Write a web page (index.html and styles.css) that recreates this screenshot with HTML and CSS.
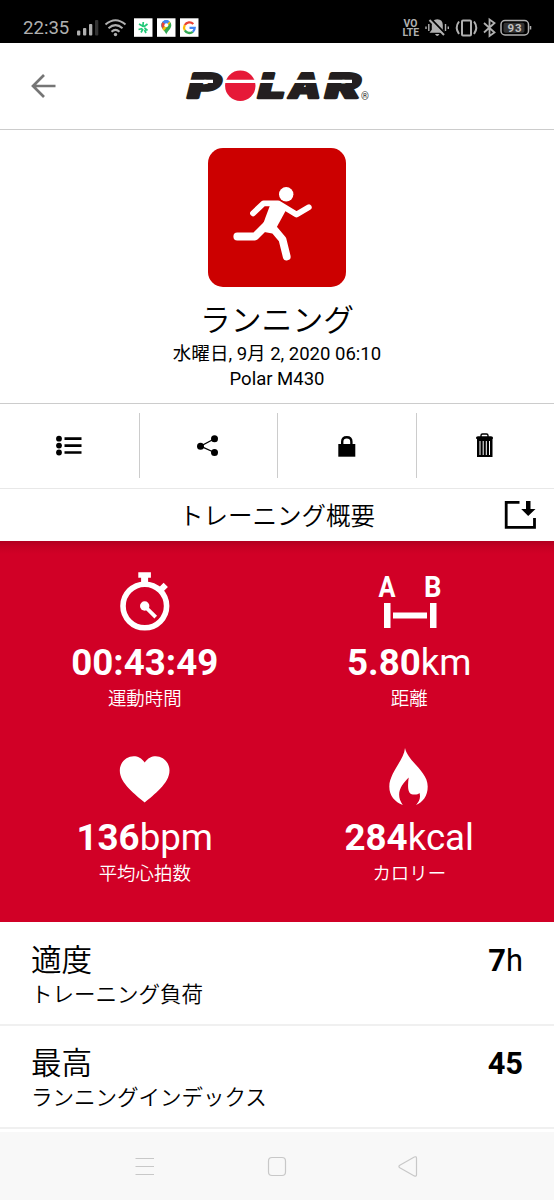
FILE: index.html
```html
<!DOCTYPE html>
<html lang="ja">
<head>
<meta charset="utf-8">
<title>Polar</title>
<link rel="stylesheet" href="styles.css">
</head>
<body>
<header class="status">
  <span class="clock">22:35</span>
  <svg class="status-left" width="132" height="43" viewBox="72 0 132 43">
    <g fill="#b0b0b0"><rect x="77" y="30.500" width="3.300" height="5" rx="1"/><rect x="83" y="28" width="3.300" height="7.500" rx="1"/><rect x="89" y="24" width="3.300" height="11.500" rx="1"/><rect x="95" y="20" width="3.300" height="15.500" rx="1" fill="#333"/></g>
    <g fill="none" stroke="#b0b0b0" stroke-width="2"><path d="M105.500 24.500Q115.500 16 125.500 24.500M108.500 28.200Q115.500 22 122.500 28.200M111.500 31.700Q115.500 28 119.500 31.700"/></g><circle cx="115.500" cy="34.500" r="1.700" fill="#b0b0b0"/>
    <g fill="#fff"><rect x="134" y="18.300" width="18.500" height="18.500"/><rect x="157" y="18.300" width="18.500" height="18.500"/><rect x="180" y="18.300" width="18.500" height="18.500"/></g>
    <path d="M139 24l3.500 2M147.500 24l-4 3M143.300 22l-.5 5M138.500 29.500l4-1M147.500 30.500l-3-2.500M141 32.500l2-3.500M146 33l-1.500-3" stroke="#20c978" stroke-width="1.700" fill="none"/>
    <g><path d="M166.300 34.500c-1-3.500-5-5.500-5-9.300a5 5 0 0 1 10 0c0 3.800-4 5.800-5 9.300z" fill="#34a853"/><path d="M161.300 25.200a5 5 0 0 1 6.500-4.700l-3 4-2.800 3.400z" fill="#4285f4"/><path d="M161.500 26a5 5 0 0 1 1.200-4l3 2.500-3.300 4z" fill="#ea4335"/><path d="M162.300 28.700l6.600-7.500 1.500 1.500-6.500 8z" fill="#fbbc04"/><path d="M163 21.500a5 5 0 0 1 6.500 0l-3 3z" fill="#4285f4"/><circle cx="166.300" cy="25.200" r="1.900" fill="#fff"/></g>
    <g fill="none" stroke-width="2.300"><path d="M193.300 24a5.400 5.400 0 0 0-8.500 1" stroke="#ea4335"/><path d="M184.800 25a5.400 5.400 0 0 0 0 5.300" stroke="#fbbc05"/><path d="M184.800 30.300a5.400 5.400 0 0 0 8 1.500" stroke="#34a853"/><path d="M192.800 31.800a5.400 5.400 0 0 0 1.900-4h-5.200" stroke="#4285f4"/></g>
  </svg>
  <svg class="status-right" width="134" height="43" viewBox="400 0 134 43">
    <g fill="#b0b0b0" font-weight="700" font-size="10.400"><text x="403.500" y="26.700" textLength="14">VO</text><text x="402.500" y="35.800" textLength="16.500">LTE</text></g>
    <path d="M429.500 32.800l2.300-3v-4.500q0-6 5.500-6t5.500 6v4.500l2.300 3z" fill="#b0b0b0"/><path d="M435 34h4.500q-2.200 4-4.500 0z" fill="#b0b0b0"/>
    <path d="M431 19l14.500 15" stroke="#000" stroke-width="2"/><path d="M429.500 20l14.500 15" stroke="#b0b0b0" stroke-width="2"/>
    <path d="M428.800 24v7M426 26.500v2.500M445.500 24v7M448.300 26.500v2.500" stroke="#b0b0b0" stroke-width="1.400"/>
    <g fill="none" stroke="#b0b0b0" stroke-width="2"><rect x="462" y="20.500" width="9" height="15" rx="1"/><path d="M459 21.500q-4.500 6 0 12.500M474 21.500q4.500 6 0 12.500"/><path d="M484 23l10.500 9.500-5 3.500V19.500l5 3.500L484 32.500" stroke-width="1.800"/><rect x="501" y="20.500" width="27.500" height="14.500" rx="4" stroke-width="1.500"/></g>
    <rect x="503.500" y="22.800" width="21" height="10" rx="2" fill="#333"/><path d="M530.500 26v3.500" stroke="#b0b0b0" stroke-width="1.500"/><text x="507.500" y="32" font-weight="700" font-size="11.500" textLength="14" fill="#c0c0c0">93</text>
  </svg>
</header>
<div class="appbar">
  <svg class="back" width="26" height="26" viewBox="30 73 26 26"><path d="M55.500 86H32.500M44 75L33 86l11 11" fill="none" stroke="#757575" stroke-width="2.700"/></svg>
  <svg class="logo" width="190" height="36" viewBox="182 68 190 36">
    <g class="wordmark"><text transform="translate(185.500 97.500) skewX(-14) scale(1.450 1)" textLength="22.500" lengthAdjust="spacingAndGlyphs">P</text><text transform="translate(256 97.500) skewX(-14) scale(1.450 1)" textLength="18.500" lengthAdjust="spacingAndGlyphs">L</text><text transform="translate(287 97.500) skewX(-10) scale(1.450 1)" textLength="22" lengthAdjust="spacingAndGlyphs">A</text><text transform="translate(323 97.500) skewX(-14) scale(1.450 1)" textLength="24" lengthAdjust="spacingAndGlyphs">R</text></g>
    <circle cx="240.300" cy="85.800" r="15.200" fill="#e61938"/><path d="M182 81.300h31M224 81.300h99M323 81.300h29" stroke="#fff" stroke-width="3.300"/>
    <text x="361" y="99.500" font-size="10" fill="#333">®</text>
  </svg>
</div>
<section class="session">
  <div class="sport"><svg width="138" height="138" viewBox="208 148 138 138"><g fill="none" stroke="#fff" stroke-linecap="round" stroke-linejoin="round"><path d="M253 213.300l10.500-10h14.500l18.500 11.200 12.300-7.200" stroke-width="5.800"/><path d="M237.300 236.500h17.700l12-12M272 227l10.500 12.500 4.200 17" stroke-width="7.800"/></g><path d="M270.500 204h12l3.300 6.500-9.500 17.500-4 5.500-8-1.500-2-6z" fill="#fff"/><circle cx="286.200" cy="194.300" r="7.200" fill="#fff"/></svg></div>
  <h1>ランニング</h1>
  <p class="date">水曜日, 9月 2, 2020 06:10</p>
  <p class="device">Polar M430</p>
</section>
<nav class="actions">
  <div><svg width="28" height="28" viewBox="56 432 28 28"><path d="M65.500 438.700h17M65.500 445.600h17M65.500 452.500h17" stroke="#000" stroke-width="2.700"/><circle cx="60" cy="438.700" r="2.900"/><circle cx="60" cy="445.600" r="2.900"/><circle cx="60" cy="452.500" r="2.900"/></svg></div>
  <div><svg width="28" height="28" viewBox="194 432 28 28"><path d="M214.500 438.700l-14 7.500 14 6.300" fill="none" stroke="#000" stroke-width="1.300"/><circle cx="214.500" cy="438.700" r="3.500"/><circle cx="200.500" cy="446.300" r="3.500"/><circle cx="214.500" cy="452.500" r="3.500"/></svg></div>
  <div><svg width="28" height="28" viewBox="333 432 28 28"><path d="M338.300 444h17v12.700h-17z"/><path d="M342.200 445v-3.300q0-4.500 4.600-4.500t4.600 4.500v3.300" fill="none" stroke="#000" stroke-width="2.400"/></svg></div>
  <div><svg width="28" height="28" viewBox="471 432 28 28"><path d="M481 437v-1.500q0-1.500 1.500-1.500h4q1.500 0 1.500 1.500v1.500" fill="none" stroke="#000" stroke-width="1.400"/><path d="M476 437.700q0-1.500 2-1.500h13q2 0 2 1.500v1h-17zM477 438.500h15.500v18.500H477z"/><path d="M480 441v14M483.200 441v14M486.300 441v14M489.500 441v14" stroke="#fff" stroke-width="1"/></svg></div>
</nav>
<div class="summary-title"><h2>トレーニング概要</h2><svg class="export" width="34" height="32" viewBox="503 500 34 32"><path d="M519.500 503.300H506.200V528.300H534.500V519" fill="none" stroke="#000" stroke-width="2.800"/><path d="M526 502h4.500v8h5l-7.300 7-7-7H526z"/></svg></div>
<main class="metrics">
  <div class="metric"><svg width="60" height="64" viewBox="115 569 60 64"><circle cx="144.800" cy="606" r="21.800" fill="none" stroke="#fff" stroke-width="5.600"/><g fill="#fff"><path d="M138.300 572.300h12.600v5.500h-2.800v6h-7v-6h-2.800zM163.600 582.700l4.300 4.300-5 5-4.300-4.300z"/><circle cx="144.700" cy="606" r="4.700"/></g><path d="M145 606.500l10.700 10.700" stroke="#fff" stroke-width="3.800"/></svg><strong>00:43:49</strong><span>運動時間</span></div>
  <div class="metric"><svg width="70" height="64" viewBox="374 569 70 64"><g fill="#fff" font-weight="700" font-size="30"><text x="378.500" y="596.500" textLength="17" lengthAdjust="spacingAndGlyphs">A</text><text x="424" y="596.500" textLength="17.500" lengthAdjust="spacingAndGlyphs">B</text></g><path d="M384 603h6.500v25H384zM430 603h6.500v25H430zM393 612.500h34v6H393z" fill="#fff"/></svg><strong>5.80<em>km</em></strong><span>距離</span></div>
  <div class="metric"><svg width="60" height="64" viewBox="115 744 60 64"><path d="M144.700 802.500C136 795 119.800 783.500 119.800 770.500C119.800 757.500 136.500 750.500 144.700 762.500C153 750.500 169.500 757.500 169.500 770.500C169.500 783.500 153.500 795 144.700 802.500z" fill="#fff"/></svg><strong>136<em>bpm</em></strong><span>平均心拍数</span></div>
  <div class="metric"><svg width="60" height="64" viewBox="379 744 60 64"><path d="M405 748C404 760 389.300 773 389.300 786.500C389.300 796 395 802 402.800 805C395 794 401 785 408.700 777.500C407.500 786 407.500 794.500 413 794.500C416 794.800 418 794.500 419.500 793C421 798 419 802 416 805C423 802 427.700 796 427.700 786.500C427.700 771 408 762 405 748z" fill="#fff"/></svg><strong>284<em>kcal</em></strong><span>カロリー</span></div>
</main>
<section class="rows">
  <div class="row"><div><h3>適度</h3><p>トレーニング負荷</p></div><strong>7<em>h</em></strong></div>
  <div class="row"><div><h3>最高</h3><p>ランニングインデックス</p></div><strong>45</strong></div>
</section>
<footer class="sysnav">
  <svg width="24" height="24" viewBox="133 1154 24 24"><path d="M135.500 1158.500h18.500M135.500 1166.500h18.500M135.500 1174.500h18.500"/></svg>
  <svg width="24" height="24" viewBox="265 1154 24 24"><rect x="268.500" y="1157.500" width="17" height="18" rx="3.500"/></svg>
  <svg width="24" height="24" viewBox="396 1154 24 24"><path d="M399.800 1165.200l14.500-8.200q2.200-.8 2.200 1.200v16.500q0 2-2.200 1.200l-14.500-8.200q-1.800-1.300 0-2.500z"/></svg>
</footer>
</body>
</html>
```

FILE: styles.css
```css
* { box-sizing: border-box; margin: 0; padding: 0; }
body { width: 554px; height: 1200px; overflow: hidden; display: flex; flex-direction: column; background: #fff; color: #000; font-family: Roboto, "Noto Sans CJK JP", sans-serif; }
svg { display: block; flex: none; overflow: visible; }
em { font-style: normal; font-weight: 400; }
h1, h2, h3 { font-weight: 350; }

.status { height: 43px; flex: none; background: #000; color: #b0b0b0; display: flex; align-items: center; padding: 0 20px 0 23px; }
.clock { width: 49px; font-size: 18.6px; line-height: 22px; padding-top: 13px; }
.status-right { margin-left: auto; }

.appbar { height: 87px; flex: none; border-bottom: 1px solid #ccc; display: flex; align-items: center; padding-left: 30px; }
.logo { margin-left: 126px; }
.wordmark { font-family: Inter, Roboto, sans-serif; font-weight: 900; font-size: 34px; fill: #231f20; stroke: #231f20; stroke-width: 2.4px; stroke-linejoin: round; }

.session { height: 274px; flex: none; border-bottom: 1px solid #ccc; padding-top: 18px; display: flex; flex-direction: column; align-items: center; }
.sport { width: 138px; height: 139px; border-radius: 15px; background: #c00; }
h1 { font-size: 30.8px; line-height: 36px; margin-top: 16px; }
.date, .device { font-size: 18.52px; line-height: 25px; }
.date { margin-top: 3px; }

.actions { height: 85px; flex: none; border-bottom: 1px solid #e8e8e8; display: grid; grid-template-columns: repeat(4, 1fr); padding: 9px 0 10px; }
.actions > div { display: flex; align-items: center; justify-content: center; }
.actions > div + div { border-left: 1px solid #ccc; }

.summary-title { height: 52px; flex: none; display: grid; grid-template-columns: 1fr auto 1fr; align-items: center; padding: 0 17px; }
.summary-title h2 { grid-column: 2; font-size: 24.5px; line-height: 36px; padding-top: 4px; }
.export { justify-self: end; }

.metrics { height: 381px; flex: none; padding: 28px 12.5px 0; background: linear-gradient(#b00020, #c40023 5px, #d10026 13px); color: #fff; display: grid; grid-template-columns: 1fr 1fr; grid-template-rows: 175px 175px; }
.metric { display: flex; flex-direction: column; align-items: center; }
.metric strong { font-size: 36.7px; line-height: 44px; margin-top: 8px; }
.metric span { font-size: 18.46px; line-height: 26px; margin-top: 1px; font-weight: 350; }

.rows { height: 210px; flex: none; padding-top: 1px; }
.row { height: 103px; border-bottom: 2px solid #f0f0f0; display: flex; justify-content: space-between; padding: 19px 31px 0; }
.row h3 { font-size: 30.6px; line-height: 38px; }
.row p { font-size: 21.5px; line-height: 30px; font-weight: 350; }
.row strong { font-size: 30.8px; line-height: 38px; }

.sysnav { height: 68px; flex: none; background: #f8f8f8; display: flex; justify-content: space-between; align-items: center; padding: 0 134px 0 133px; }
.sysnav svg { fill: none; stroke: #c8c8c8; stroke-width: 1.2; }
```
